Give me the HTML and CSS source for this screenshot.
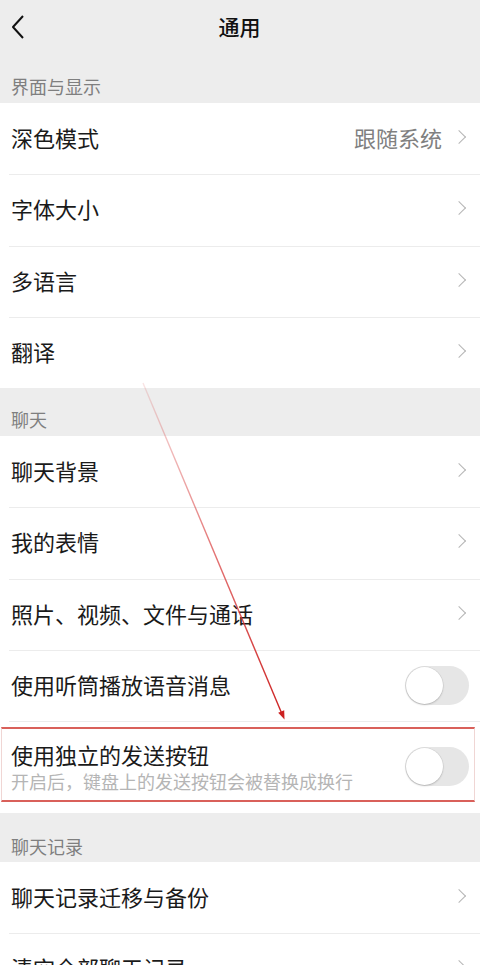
FILE: index.html
```html
<!DOCTYPE html>
<html lang="zh-CN">
<head>
<meta charset="utf-8">
<title>通用</title>
<link rel="stylesheet" href="styles.css">
</head>
<body>
<div class="page">
  <header class="navbar">
    <span class="back">
      <svg width="14" height="24" viewBox="0 0 14 24"><path d="M12 1 L2 12 L12 23" fill="none" stroke="#111" stroke-width="2" stroke-linejoin="round"/></svg>
    </span>
    <h1 class="title">通用</h1>
    <span></span>
  </header>

  <div class="section-label">界面与显示</div>
  <div class="group">
    <div class="row"><span class="row-text">深色模式</span><span class="row-right"><span class="value">跟随系统</span><i class="chev"></i></span></div>
    <div class="row"><span class="row-text">字体大小</span><span class="row-right"><i class="chev"></i></span></div>
    <div class="row"><span class="row-text">多语言</span><span class="row-right"><i class="chev"></i></span></div>
    <div class="row"><span class="row-text">翻译</span><span class="row-right"><i class="chev"></i></span></div>
  </div>

  <div class="section-label">聊天</div>
  <div class="group">
    <div class="row"><span class="row-text">聊天背景</span><span class="row-right"><i class="chev"></i></span></div>
    <div class="row"><span class="row-text">我的表情</span><span class="row-right"><i class="chev"></i></span></div>
    <div class="row"><span class="row-text">照片、视频、文件与通话</span><span class="row-right"><i class="chev"></i></span></div>
    <div class="row"><span class="row-text">使用听筒播放语音消息</span><span class="toggle"><span class="knob"></span></span></div>
    <div class="row row-tall">
      <div class="row-stack">
        <span class="row-text">使用独立的发送按钮</span>
        <span class="row-sub">开启后，键盘上的发送按钮会被替换成换行</span>
      </div>
      <span class="toggle"><span class="knob"></span></span>
      <span class="highlight"></span>
    </div>
  </div>

  <div class="section-label section-label-3">聊天记录</div>
  <div class="group">
    <div class="row"><span class="row-text">聊天记录迁移与备份</span><span class="row-right"><i class="chev"></i></span></div>
    <div class="row"><span class="row-text">清空全部聊天记录</span><span class="row-right"><i class="chev"></i></span></div>
  </div>

  <svg class="annotation" width="480" height="965" viewBox="0 0 480 965">
    <defs>
      <linearGradient id="arrowGrad" gradientUnits="userSpaceOnUse" x1="143" y1="383" x2="282" y2="716">
        <stop offset="0" stop-color="#d84a4a" stop-opacity="0.15"/>
        <stop offset="0.5" stop-color="#d83a3a" stop-opacity="0.7"/>
        <stop offset="1" stop-color="#cc2020" stop-opacity="1"/>
      </linearGradient>
    </defs>
    <line x1="143" y1="383" x2="282" y2="714" stroke="url(#arrowGrad)" stroke-width="1.4"/>
    <polygon points="284.5,719.5 284.2,710.2 278.2,712.8" fill="#cc2020"/>
  </svg>
</div>
</body>
</html>
```

FILE: styles.css
```css
* { box-sizing: border-box; }

html, body {
  margin: 0;
  padding: 0;
  background: #ededed;
}

body {
  font-family: "Noto Sans CJK SC", "Noto Sans", sans-serif;
  color: #1a1a1a;
}

.page {
  position: relative;
  width: 480px;
  height: 965px;
  overflow: hidden;
  background: #ededed;
}

.navbar {
  height: 55px;
  display: grid;
  grid-template-columns: 1fr auto 1fr;
  align-items: center;
  padding: 0 11px;
}

.back {
  display: flex;
  align-items: center;
  height: 24px;
  margin-top: -1px;
}

.title {
  margin: 0 0 0 -1px;
  font-size: 21px;
  font-weight: 500;
  line-height: 28px;
  color: #111;
  position: relative;
  top: -2px;
}

.section-label {
  height: 48px;
  display: flex;
  align-items: flex-end;
  padding: 0 11px 5px;
  font-size: 18px;
  line-height: 24px;
  color: #7f7f7f;
}

.section-label-3 {
  height: 49px;
  padding-bottom: 4px;
}

.group {
  background: #fff;
}

.row {
  position: relative;
  height: 71.25px;
  display: flex;
  align-items: center;
  justify-content: space-between;
  padding: 0 11px 3px 11px;
}

.row + .row::before {
  content: "";
  position: absolute;
  top: 0;
  left: 9px;
  right: 0;
  height: 1px;
  background: #ececec;
}

.row-text {
  font-size: 22px;
  line-height: 28px;
  color: #1a1a1a;
}

.row-right {
  display: flex;
  align-items: center;
  gap: 12px;
  padding-right: 3px;
}

.value {
  font-size: 22px;
  line-height: 28px;
  color: #808080;
}

.chev {
  display: block;
  width: 10px;
  height: 10px;
  border-top: 1.6px solid #b5b5b5;
  border-right: 1.6px solid #b5b5b5;
  transform: rotate(45deg);
  margin-right: 2px;
}

.toggle {
  position: relative;
  display: block;
  width: 64px;
  height: 39px;
  border-radius: 20px;
  background: #e6e6e6;
  flex: none;
  margin-top: 3px;
}

.knob {
  position: absolute;
  top: 1px;
  left: 1px;
  width: 37px;
  height: 37px;
  border-radius: 50%;
  background: #fff;
  box-shadow: 0 1px 2px rgba(0, 0, 0, 0.18), 0 0 0 0.5px rgba(0, 0, 0, 0.08);
}

.row-tall {
  height: 92px;
  padding-bottom: 2px;
}

.row-tall .toggle {
  margin-top: 0;
}

.row-stack {
  display: flex;
  flex-direction: column;
}

.row-sub {
  margin-top: 1px;
  font-size: 18px;
  line-height: 24px;
  color: #b5b5b5;
}

.highlight {
  position: absolute;
  top: 6px;
  left: 1px;
  right: 5px;
  height: 75px;
  border-top: 2px solid #d9605a;
  border-bottom: 2px solid #d9605a;
  border-left: 1px solid #f0d6d4;
  border-right: 1px solid #f0d6d4;
  pointer-events: none;
}

.annotation {
  position: absolute;
  top: 0;
  left: 0;
  pointer-events: none;
}
```
